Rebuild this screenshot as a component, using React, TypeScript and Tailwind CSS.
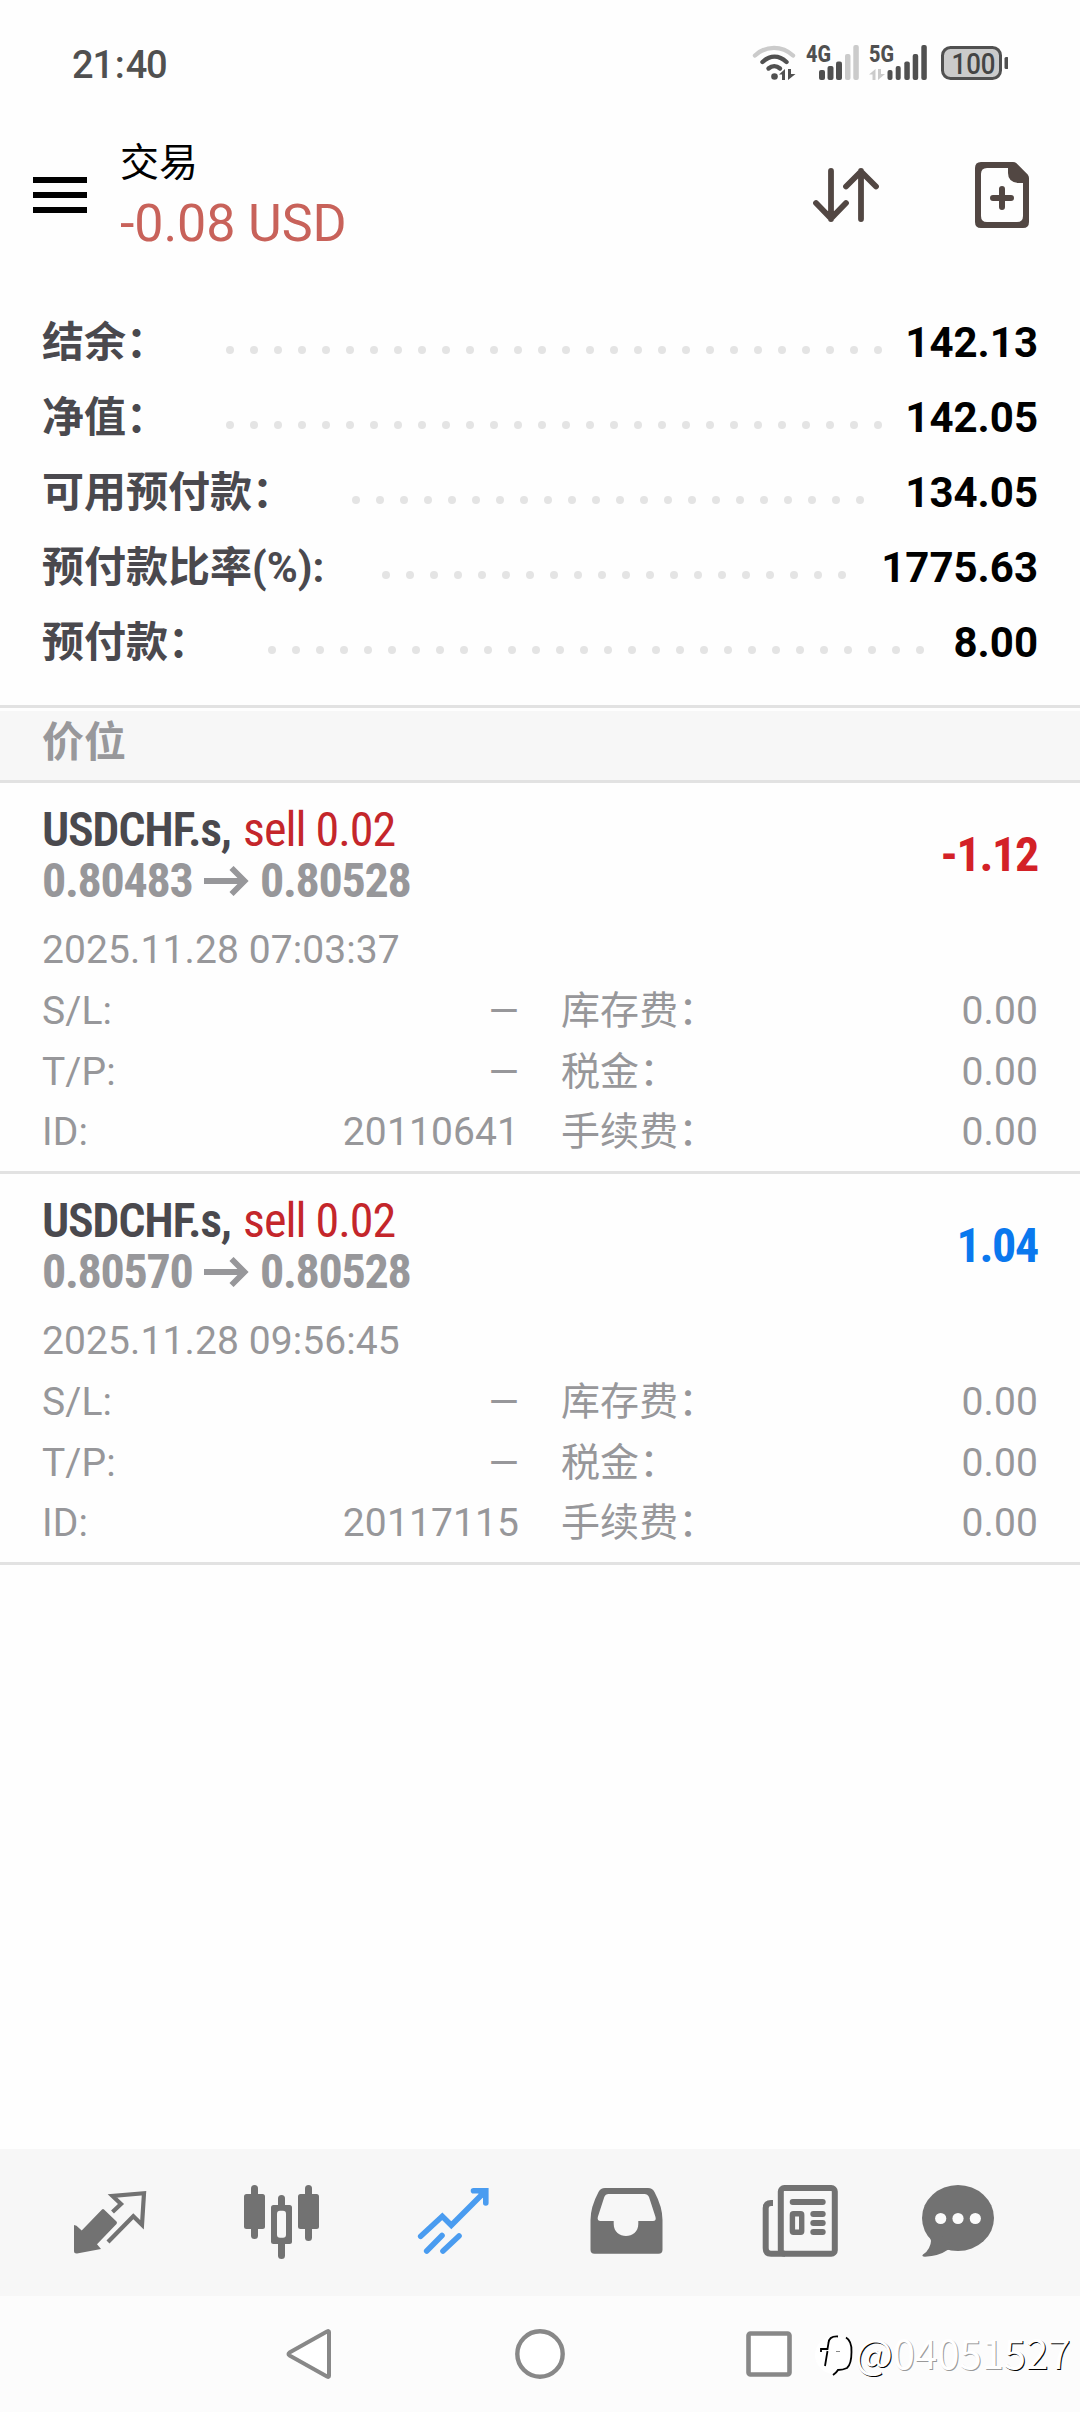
import type { ReactNode } from 'react'

type BalanceRow = { label: string; value: string; dots: number }

type Trade = {
  symbol: string
  side: string
  open: string
  current: string
  time: string
  id: string
  profit: string
}

const BALANCE: BalanceRow[] = [
  { label: '结余：', value: '142.13', dots: 28 },
  { label: '净值：', value: '142.05', dots: 28 },
  { label: '可用预付款：', value: '134.05', dots: 22 },
  { label: '预付款比率(%):', value: '1775.63', dots: 20 },
  { label: '预付款：', value: '8.00', dots: 28 },
]

const TRADES: Trade[] = [
  {
    symbol: 'USDCHF.s,',
    side: 'sell 0.02',
    open: '0.80483',
    current: '0.80528',
    time: '2025.11.28 07:03:37',
    id: '20110641',
    profit: '-1.12',
  },
  {
    symbol: 'USDCHF.s,',
    side: 'sell 0.02',
    open: '0.80570',
    current: '0.80528',
    time: '2025.11.28 09:56:45',
    id: '20117115',
    profit: '1.04',
  },
]

function StatusBar() {
  return (
    <div className="flex h-[130px] shrink-0 items-start justify-between pr-[72px] pl-[72px]">
      <span className="mt-[46px] text-[38px] leading-[38px] font-medium tracking-[-1.2px] text-[#505050]">
        21<span className="mx-[2px]">:</span>40
      </span>
      <svg className="mt-[34px] h-[48px] w-[256px]" viewBox="0 -10 256 48" fill="none">
        {/* wifi */}
        <g strokeWidth="4.4" strokeLinecap="round">
          <path d="M3 11.500C14 1.300 30 1.300 41 11.500" stroke="#cbcbcb" />
          <path d="M10.500 18C18 11 27 11 34.500 18" stroke="#505050" />
          <path d="M16.500 24.500C20 21.500 24.500 21.500 28 24.500" stroke="#505050" />
        </g>
        <circle cx="22.500" cy="32.500" r="3.300" fill="#505050" />
        <path d="M27 30.500 33 25V36H30V30.500ZM36 25V36L43.500 30H39V25Z" fill="#505050" />
        {/* 4G */}
        <text x="54" y="17.800" fontSize="23" fontWeight="800" textLength="25" lengthAdjust="spacingAndGlyphs" fill="#505050">
          4G
        </text>
        <rect x="67" y="26" width="6" height="10" rx="2" fill="#505050" />
        <rect x="75.500" y="22" width="6" height="14" rx="2" fill="#505050" />
        <rect x="84" y="17.500" width="6" height="18.500" rx="2" fill="#505050" />
        <rect x="93" y="10" width="5.500" height="26" rx="2" fill="#cbcbcb" />
        <rect x="101.300" y="1" width="5.500" height="35" rx="2" fill="#cbcbcb" />
        {/* 5G */}
        <text x="117" y="17.800" fontSize="23" fontWeight="800" textLength="25" lengthAdjust="spacingAndGlyphs" fill="#505050">
          5G
        </text>
        <path d="M117 30.500 123.500 25V36H120.500V30.500ZM126 25V36L133 30H129V25Z" fill="#cbcbcb" />
        <rect x="135.500" y="26" width="5" height="10" rx="2" fill="#505050" />
        <rect x="143.700" y="22" width="5" height="14" rx="2" fill="#505050" />
        <rect x="152.300" y="17.500" width="5.500" height="18.500" rx="2" fill="#505050" />
        <rect x="160.700" y="10" width="5.500" height="26" rx="2" fill="#505050" />
        <rect x="169.300" y="1" width="5.500" height="35" rx="2" fill="#505050" />
        {/* battery */}
        <rect x="190.500" y="3.500" width="58" height="31" rx="8" fill="#cbcbcb" stroke="#505050" strokeWidth="3" />
        <rect x="252.500" y="13" width="4" height="12" rx="1.500" fill="#505050" />
        <text x="199.500" y="29.500" fontSize="29" fontWeight="500" textLength="44" lengthAdjust="spacingAndGlyphs" fill="#444">
          100
        </text>
      </svg>
    </div>
  )
}

function Header() {
  return (
    <header className="flex h-[175px] shrink-0 items-start pr-[51px] pl-[33px]">
      <div className="mt-[47px] flex w-[54px] flex-col gap-[9px]">
        <div className="h-[6px] bg-black" />
        <div className="h-[6px] bg-black" />
        <div className="h-[6px] bg-black" />
      </div>
      <div className="mt-[9px] ml-[33px] flex flex-1 flex-col">
        <h1 className="text-[39px] leading-[48px] text-black">交易</h1>
        <span className="text-[52px] leading-[73px] tracking-[-0.1px] text-[#c8625a]">-0.08 USD</span>
      </div>
      <svg
        className="mt-[38px] h-[54px] w-[66px]"
        viewBox="0 0 66 54"
        fill="none"
        stroke="#524743"
        strokeWidth="5.8"
        strokeLinecap="round"
        strokeLinejoin="round"
      >
        <path d="M18 3V51M3 35 18 50.500 33 35" />
        <path d="M48 51V3M33 18.500 48 3.500 63 18.500" />
      </svg>
      <svg className="mt-[32px] ml-[96px] h-[66px] w-[54px]" viewBox="0 0 54 66">
        <path
          fillRule="evenodd"
          fill="#524743"
          d="M6 0H38Q40 0 41.500 1.300L52.700 12.500Q54 14 54 16V60Q54 66 48 66H6Q0 66 0 60V6Q0 0 6 0ZM12 6Q6 6 6 12V54Q6 60 12 60H42Q48 60 48 54V21H43Q33 20 33 11V6Z"
        />
        <path d="M27 27V45M18 36H36" stroke="#524743" strokeWidth="6" strokeLinecap="round" />
      </svg>
    </header>
  )
}

function Balance() {
  return (
    <section className="flex h-[400px] shrink-0 flex-col px-[42px]">
      {BALANCE.map((row) => (
        <div key={row.label} className="flex h-[75px] text-[42px] leading-[75px] font-bold">
          <span className="text-[#4a494e]">{row.label}</span>
          <div className="ml-[58px] flex flex-1 gap-[16px] pt-[41px]">
            {Array.from({ length: row.dots }, (_, i) => (
              <div key={i} className="size-[8px] shrink-0 rounded-full bg-[#e4e4e4]" />
            ))}
          </div>
          <span className="text-black">{row.value}</span>
        </div>
      ))}
    </section>
  )
}

function DetailRow({ name, value, fee }: { name: string; value: string; fee: string }) {
  return (
    <div className="flex gap-[42px] leading-[60.5px]">
      <div className="flex w-[477px] justify-between">
        <span>{name}</span>
        <span>{value}</span>
      </div>
      <div className="flex flex-1 justify-between">
        <span>{fee}</span>
        <span>0.00</span>
      </div>
    </div>
  )
}

function TradeCard({ trade }: { trade: Trade }) {
  const loss = trade.profit.startsWith('-')

  return (
    <article className="h-[391px] shrink-0 border-b-[3px] border-[#e2e2e2] px-[42px] pt-[21px]">
      <div className="flex justify-between font-['Roboto_Condensed','Roboto','Noto_Sans_CJK_SC',sans-serif] text-[48px] leading-[51px] font-bold tracking-[-1.3px]">
        <div>
          <div className="flex">
            <span className="w-[201px] font-semibold text-[#4a494e]">{trade.symbol}</span>
            <span className="font-normal tracking-[-1px] text-[#c4262b]">{trade.side}</span>
          </div>
          <div className="flex items-center text-[#97979a]">
            <span className="w-[150px]">{trade.open}</span>
            <svg
              className="mr-[11px] ml-[12px] h-[30px] w-[45px]"
              viewBox="0 0 45 30"
              fill="none"
              stroke="currentColor"
              strokeWidth="5.8"
            >
              <path d="M0 15H39M27.500 2 40.500 15 27.500 28" />
            </svg>
            <span>{trade.current}</span>
          </div>
        </div>
        <span className={loss ? 'pt-[25px] text-[#d32127]' : 'pt-[25px] text-[#0a78ee]'}>{trade.profit}</span>
      </div>
      <div className="mt-[14px] text-[39px] tracking-[0.1px] text-[#97979a]">
        <div className="leading-[61px]">{trade.time}</div>
        <DetailRow name="S/L:" value="—" fee="库存费：" />
        <DetailRow name="T/P:" value="—" fee="税金：" />
        <DetailRow name="ID:" value={trade.id} fee="手续费：" />
      </div>
    </article>
  )
}

function TabIcon({ children }: { children: ReactNode }) {
  return (
    <svg className="h-[85px] w-[86px]" viewBox="0 0 86 85" fill="none">
      {children}
    </svg>
  )
}

function TabBar() {
  return (
    <nav className="flex h-[147px] shrink-0 items-center bg-[#f7f7f7] pl-[24px] text-[#727272]">
      <div className="flex w-[172px] justify-center">
        <TabIcon>
          <path
            fill="currentColor"
            d="M35 29.500Q36 28.700 37 29.500L49.500 41.500Q50.500 42.700 49.500 44L30 64.300 34 69 10 73.500Q7 73.700 7 71V45L9.500 45.700 14.700 50.500Z"
          />
          <path
            stroke="currentColor"
            strokeWidth="4.2"
            d="M45.500 32 54 24 45.500 16 77 13.200 75 44.800 66.300 36.300 41 62"
          />
        </TabIcon>
      </div>
      <div className="flex w-[172px] justify-center">
        <TabIcon>
          <g fill="currentColor">
            <rect x="12" y="5" width="7" height="54" rx="3.500" />
            <rect x="5" y="14" width="21" height="35" rx="2.500" />
            <rect x="39" y="15" width="7" height="64" rx="3.500" />
            <rect x="32" y="25" width="21" height="39" rx="2.500" />
            <rect x="66" y="5" width="7" height="56" rx="3.500" />
            <rect x="59" y="14" width="21" height="35" rx="2.500" />
          </g>
          <rect x="38" y="30.700" width="9" height="27" rx="3" fill="#f7f7f7" />
        </TabIcon>
      </div>
      <div className="flex w-[172px] justify-center">
        <TabIcon>
          <g stroke="#4a9cf0" strokeWidth="5.6" strokeLinecap="round">
            <path d="M9.700 56.300 31.300 36.300 40.300 45.300 72 13.500" />
            <path d="M62.500 10.800H74.800V23" />
            <path d="M15.700 71 31 55.500M32 71 48 56" />
          </g>
          <path d="M66 12H76V22Z" fill="#4a9cf0" />
        </TabIcon>
      </div>
      <div className="flex w-[172px] justify-center">
        <TabIcon>
          <path
            fill="currentColor"
            fillRule="evenodd"
            d="M22 8H65Q69.500 8 71.500 12Q79.500 27 79.500 40V69.700Q79.500 73.700 75.500 73.700H11.500Q7.500 73.700 7.500 69.700V40Q7.500 27 15.500 12Q17.500 8 22 8ZM25.500 14Q22.500 14 21.300 17L14.800 37Q14 41 17.500 41H30.700V44C30.700 60 55.300 60 55.300 44V41H70Q73.500 41 72.500 37L66 17Q64.500 14 61.500 14Z"
          />
        </TabIcon>
      </div>
      <div className="flex w-[172px] justify-center">
        <TabIcon>
          <path
            stroke="currentColor"
            strokeWidth="6"
            d="M18 23H16Q10.700 23 10.700 28V68Q10.700 73.700 16 73.700H30"
          />
          <rect x="25.800" y="8" width="54" height="65.700" rx="3.500" stroke="currentColor" strokeWidth="6" />
          <rect x="34.700" y="19" width="36" height="6" rx="3" fill="currentColor" />
          <rect x="37.400" y="33.700" width="9.300" height="18.600" rx="1" stroke="currentColor" strokeWidth="5.4" />
          <rect x="55.300" y="31" width="15.400" height="6" rx="3" fill="currentColor" />
          <rect x="55.300" y="40" width="15.400" height="6" rx="3" fill="currentColor" />
          <rect x="55.300" y="49" width="15.400" height="6" rx="3" fill="currentColor" />
        </TabIcon>
      </div>
      <div className="flex w-[148px] justify-center">
        <TabIcon>
          <ellipse cx="43" cy="38" rx="36" ry="33" fill="currentColor" />
          <path
            fill="currentColor"
            d="M14 56Q18 60 14 68Q12 72 8 74.500Q6 76.500 10 76.700Q24 76 32.500 70Q36 69 42 69L20 50Z"
          />
          <g fill="#fbfbfb">
            <circle cx="25.700" cy="38.500" r="5.600" />
            <circle cx="43" cy="38.500" r="5.600" />
            <circle cx="60.300" cy="38.500" r="5.600" />
          </g>
        </TabIcon>
      </div>
    </nav>
  )
}

function SystemNav() {
  return (
    <div className="relative flex h-[116px] shrink-0 items-center justify-center gap-[180px] bg-[#fcfcfc]">
      <svg className="h-[50px] w-[50px]" viewBox="0 0 50 50">
        <path
          d="M44 3V47Q44 48.500 42 47.500L4.500 26.500Q2.500 25 4.500 23.500L42 2.500Q44 1.500 44 3Z"
          fill="#fff"
          stroke="#888"
          strokeWidth="4"
          strokeLinejoin="round"
        />
      </svg>
      <svg className="h-[50px] w-[50px]" viewBox="0 0 50 50">
        <circle cx="25" cy="25" r="22.700" fill="#fff" stroke="#888" strokeWidth="4.400" />
      </svg>
      <svg className="h-[50px] w-[50px]" viewBox="0 0 50 50">
        <rect x="3.500" y="4.500" width="41" height="41" rx="2" fill="#fff" stroke="#888" strokeWidth="4.600" />
      </svg>
      <div className="absolute top-[36px] left-[814px] flex items-start">
        <svg className="h-[48px] w-[41px]" viewBox="0 0 41 48" fill="none">
          <circle cx="20" cy="23" r="19" fill="#fff" />
          <g stroke="#000" strokeWidth="1.8">
            <path d="M24 4.500Q15 4 14.500 11L13.500 17H7V20M13.500 19 11 34" />
            <path d="M32 5.500Q38 9 37.500 20Q37.500 32 33 36Q29 38 24 38Q23 40 19 43" />
            <path d="M22 19.500H26" stroke="#888" strokeWidth="1" />
          </g>
        </svg>
        <span className="-mt-[3px] font-['Noto_Sans_CJK_SC',sans-serif] text-[40px] leading-[46px] text-white [text-shadow:1px_1px_0_#000]">
          @<span className="[text-shadow:1px_1px_0_#999]">04051</span>527
        </span>
      </div>
    </div>
  )
}

export default function App() {
  return (
    <div className="flex h-[2412px] w-[1080px] flex-col overflow-hidden bg-[#fefefe] font-['Roboto','Noto_Sans_CJK_SC',sans-serif]">
      <StatusBar />
      <Header />
      <Balance />
      <div className="h-[78px] shrink-0 border-y-[3px] border-[#e2e2e2] pt-[3px]">
        <h2 className="h-[69px] bg-[#f7f7f7] px-[42px] text-[42px] leading-[63px] font-bold text-[#98989b]">价位</h2>
      </div>
      <main className="flex flex-1 flex-col">
        {TRADES.map((trade) => (
          <TradeCard key={trade.id} trade={trade} />
        ))}
      </main>
      <TabBar />
      <SystemNav />
    </div>
  )
}
